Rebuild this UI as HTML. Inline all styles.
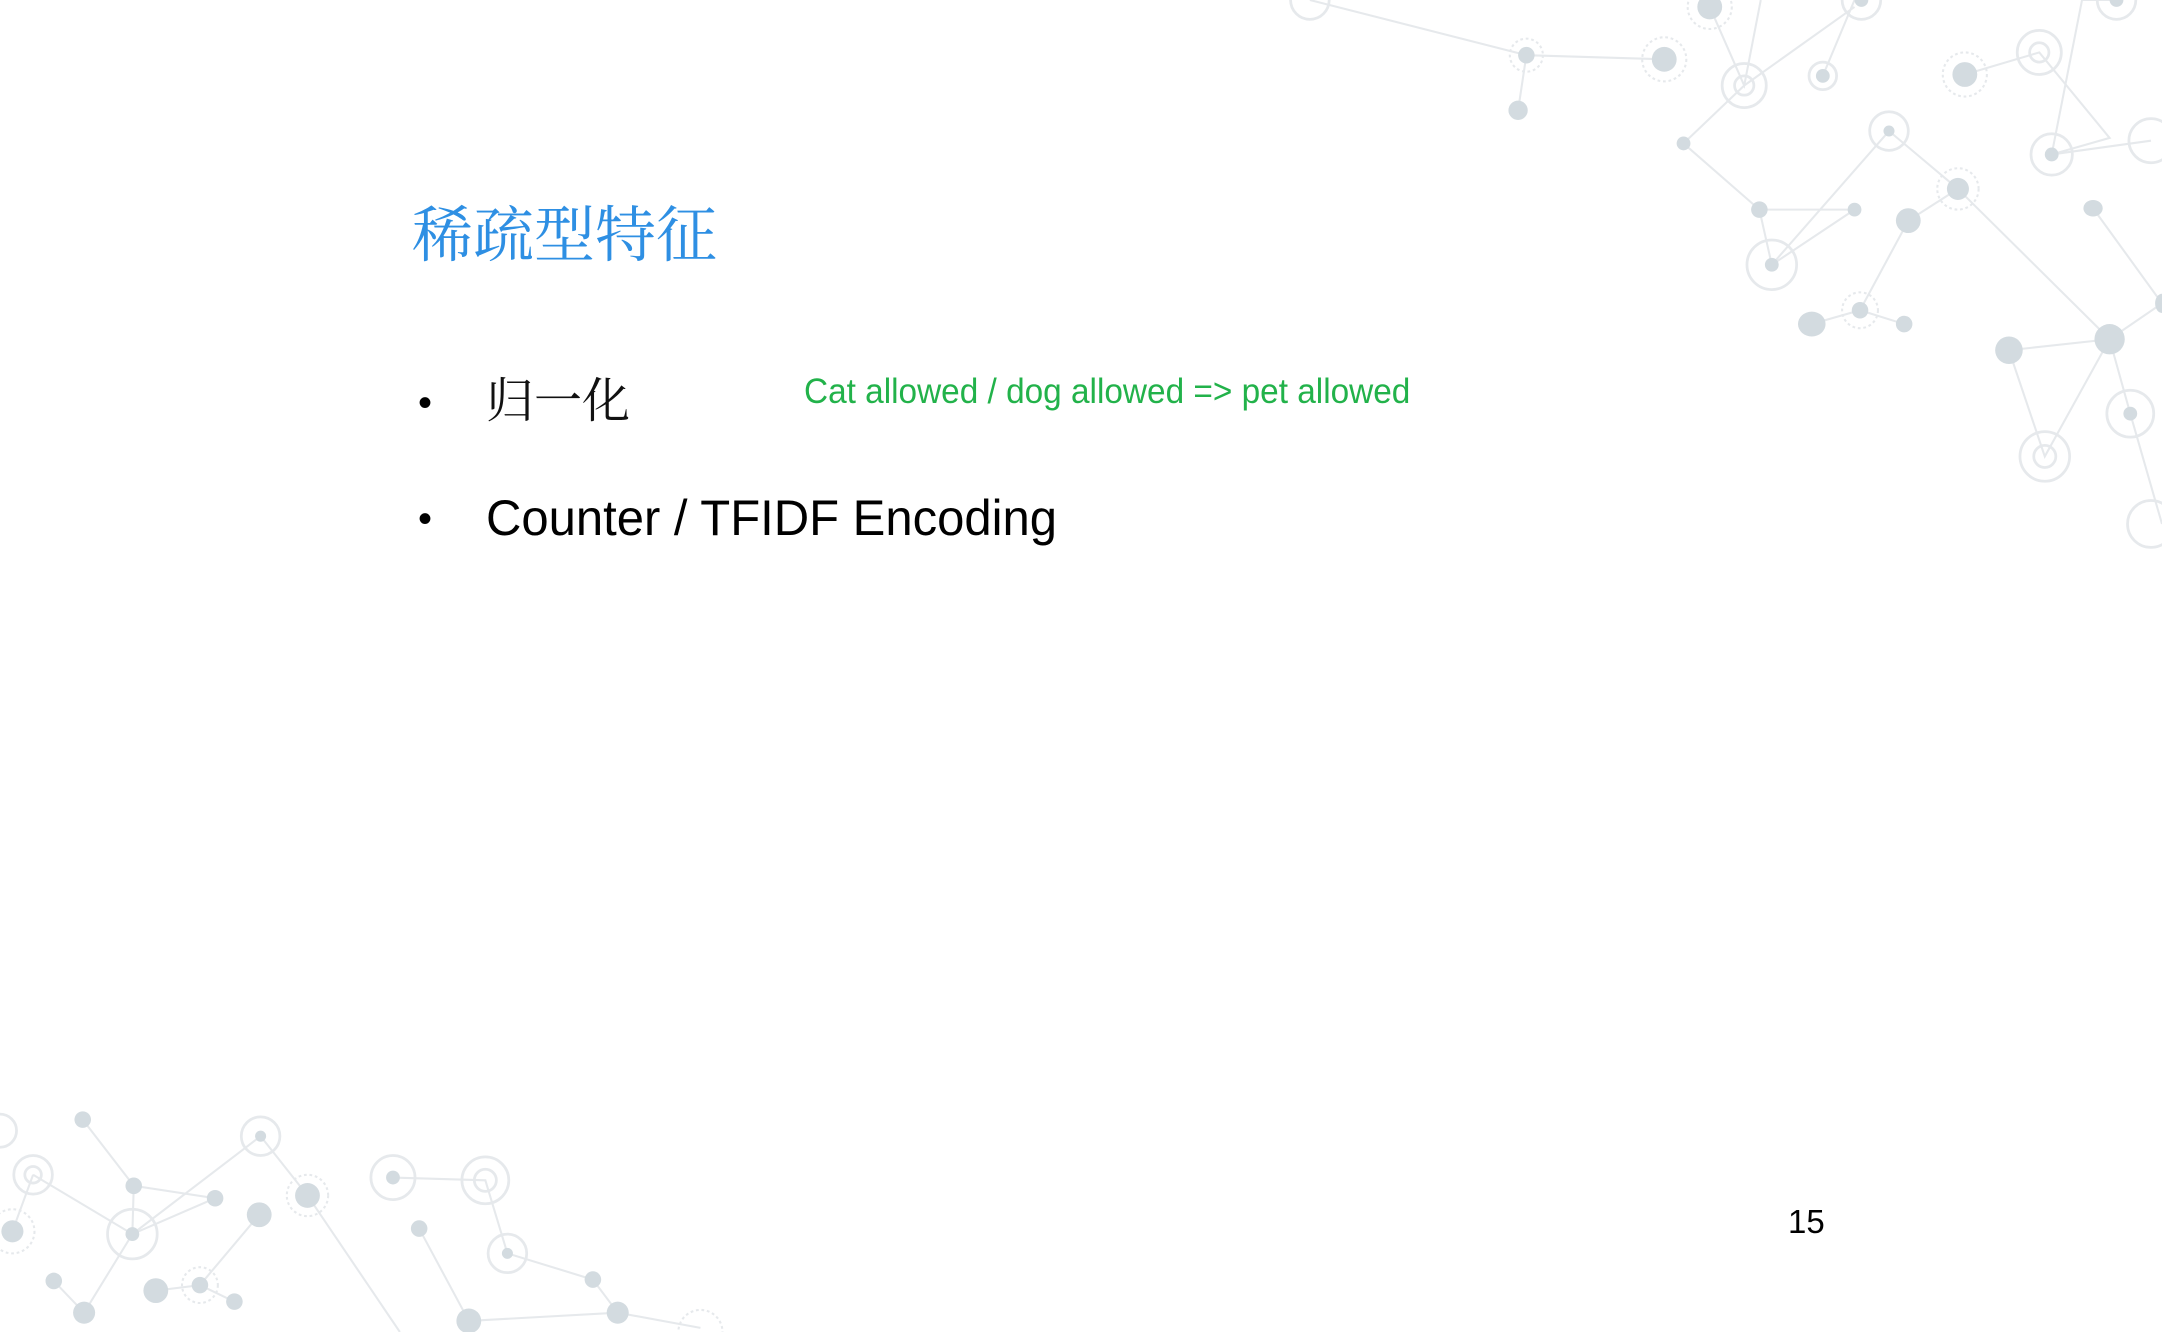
<!DOCTYPE html>
<html><head><meta charset="utf-8"><style>
html,body{margin:0;padding:0;background:#fff;}
body{width:2162px;height:1332px;position:relative;overflow:hidden;font-family:"Liberation Sans","Noto Sans CJK SC",sans-serif;}
svg{position:absolute;left:0;top:0;}
.t{position:absolute;white-space:nowrap;}
</style></head><body>
<svg width="2162" height="1332" viewBox="0 0 1568 966">
<g stroke="#e6e9ec" stroke-width="1.5" fill="none">
<path d="M950 0L1107 40L1207 43M1107 40L1101 80M1240 5L1265 62L1277 0M1265 62L1345 5M1322 55L1345 0M1221 104L1265 62M1221 104L1276 152L1345 152L1285 192L1276 152M1285 192L1370 95L1420 137L1384 160L1349 225M1314 235L1349 225L1381 235M1420 137L1530 246L1457 254L1483 331L1530 246L1568 220M1425 54L1479 38L1530 100L1488 112L1510 0L1535 0M1488 112L1560 102M1518 151L1568 220M1530 246L1545 300L1568 380"/>
<path d="M60 812L97 860L156 869L96 895L97 860M24 852L96 895L189 824L223 867M24 852L9 893M96 895L61 952L39 929M223 867L290 966M188 881L145 932L113 936M145 932L170 944M285 854L352 856L368 909L430 928L448 952L340 958M304 891L340 958M448 952L508 963"/>
</g>
<g fill="none" stroke="#e6e9ec" stroke-width="2">
<circle cx="950" cy="0" r="14"/><circle cx="1265" cy="62" r="16"/><circle cx="1265" cy="62" r="7"/>
<circle cx="1322" cy="55" r="10"/><circle cx="1350" cy="0" r="14"/><circle cx="1479" cy="38" r="16"/><circle cx="1479" cy="38" r="7"/>
<circle cx="1488" cy="112" r="15"/><circle cx="1560" cy="102" r="16"/><circle cx="1535" cy="0" r="14"/>
<circle cx="1370" cy="95" r="14"/><circle cx="1285" cy="192" r="18"/><circle cx="1545" cy="300" r="17"/>
<circle cx="1483" cy="331" r="18"/><circle cx="1483" cy="331" r="8"/><circle cx="1560" cy="380" r="17"/>
<circle cx="0" cy="820" r="12"/><circle cx="24" cy="852" r="14"/><circle cx="24" cy="852" r="6"/>
<circle cx="96" cy="895" r="18"/><circle cx="189" cy="824" r="14"/><circle cx="285" cy="854" r="16"/>
<circle cx="352" cy="856" r="17"/><circle cx="352" cy="856" r="8"/><circle cx="368" cy="909" r="14"/>
</g>
<g fill="none" stroke="#e6e9ec" stroke-width="1.5" stroke-dasharray="2 2">
<circle cx="1107" cy="40" r="12"/><circle cx="1207" cy="43" r="16"/><circle cx="1240" cy="5" r="16"/>
<circle cx="1425" cy="54" r="16"/><circle cx="1420" cy="137" r="15"/><circle cx="1349" cy="225" r="13"/>
<circle cx="9" cy="893" r="16"/><circle cx="223" cy="867" r="15"/><circle cx="145" cy="932" r="13"/><circle cx="508" cy="966" r="16"/>
</g>
<g fill="#d3dbe0">
<ellipse cx="1107" cy="40" rx="6" ry="6"/><ellipse cx="1207" cy="43" rx="9" ry="9"/><ellipse cx="1240" cy="5" rx="9" ry="9"/>
<ellipse cx="1101" cy="80" rx="7" ry="7"/><ellipse cx="1322" cy="55" rx="5" ry="5"/><ellipse cx="1350" cy="0" rx="5" ry="5"/>
<ellipse cx="1425" cy="54" rx="9" ry="9"/><ellipse cx="1488" cy="112" rx="5" ry="5"/><ellipse cx="1535" cy="0" rx="5" ry="5"/>
<ellipse cx="1221" cy="104" rx="5" ry="5"/><ellipse cx="1276" cy="152" rx="6" ry="6"/><ellipse cx="1345" cy="152" rx="5" ry="5"/>
<ellipse cx="1285" cy="192" rx="5" ry="5"/><ellipse cx="1370" cy="95" rx="4" ry="4"/><ellipse cx="1420" cy="137" rx="8" ry="8"/>
<ellipse cx="1384" cy="160" rx="9" ry="9"/><ellipse cx="1314" cy="235" rx="10" ry="9"/><ellipse cx="1349" cy="225" rx="6" ry="6"/>
<ellipse cx="1381" cy="235" rx="6" ry="6"/><ellipse cx="1518" cy="151" rx="7" ry="6"/><ellipse cx="1457" cy="254" rx="10" ry="10"/>
<ellipse cx="1530" cy="246" rx="11" ry="11"/><ellipse cx="1545" cy="300" rx="5" ry="5"/><ellipse cx="1568" cy="220" rx="5" ry="7"/>
<ellipse cx="60" cy="812" rx="6" ry="6"/><ellipse cx="97" cy="860" rx="6" ry="6"/><ellipse cx="156" cy="869" rx="6" ry="6"/>
<ellipse cx="96" cy="895" rx="5" ry="5"/><ellipse cx="189" cy="824" rx="4" ry="4"/><ellipse cx="9" cy="893" rx="8" ry="8"/>
<ellipse cx="223" cy="867" rx="9" ry="9"/><ellipse cx="188" cy="881" rx="9" ry="9"/><ellipse cx="39" cy="929" rx="6" ry="6"/>
<ellipse cx="61" cy="952" rx="8" ry="8"/><ellipse cx="113" cy="936" rx="9" ry="9"/><ellipse cx="145" cy="932" rx="6" ry="6"/>
<ellipse cx="170" cy="944" rx="6" ry="6"/><ellipse cx="285" cy="854" rx="5" ry="5"/><ellipse cx="368" cy="909" rx="4" ry="4"/>
<ellipse cx="304" cy="891" rx="6" ry="6"/><ellipse cx="430" cy="928" rx="6" ry="6"/><ellipse cx="448" cy="952" rx="8" ry="8"/><ellipse cx="340" cy="958" rx="9" ry="9"/>
</g>
</svg>
<div class="t" style="left:412px;top:200px;font-size:61px;line-height:74px;color:#2e8fe3;font-family:'Liberation Serif','Noto Serif CJK SC',serif;">稀疏型特征</div>
<div class="t" style="left:418px;top:378px;font-size:40px;line-height:50px;">•</div>
<div class="t" style="left:486px;top:372px;font-size:48px;line-height:60px;color:#111;font-family:'Liberation Serif','Noto Serif CJK SC',serif;">归一化</div>
<div class="t" style="left:804px;top:372px;font-size:35px;line-height:40px;color:#22b24a;transform:scaleX(0.953);transform-origin:0 0;">Cat allowed / dog allowed =&gt; pet allowed</div>
<div class="t" style="left:418px;top:494px;font-size:40px;line-height:50px;">•</div>
<div class="t" style="left:486px;top:488px;font-size:50px;line-height:60px;color:#000;transform:scaleX(0.98);transform-origin:0 0;">Counter / TFIDF Encoding</div>
<div class="t" style="left:1788px;top:1202px;font-size:33px;line-height:40px;color:#000;">15</div>
</body></html>
